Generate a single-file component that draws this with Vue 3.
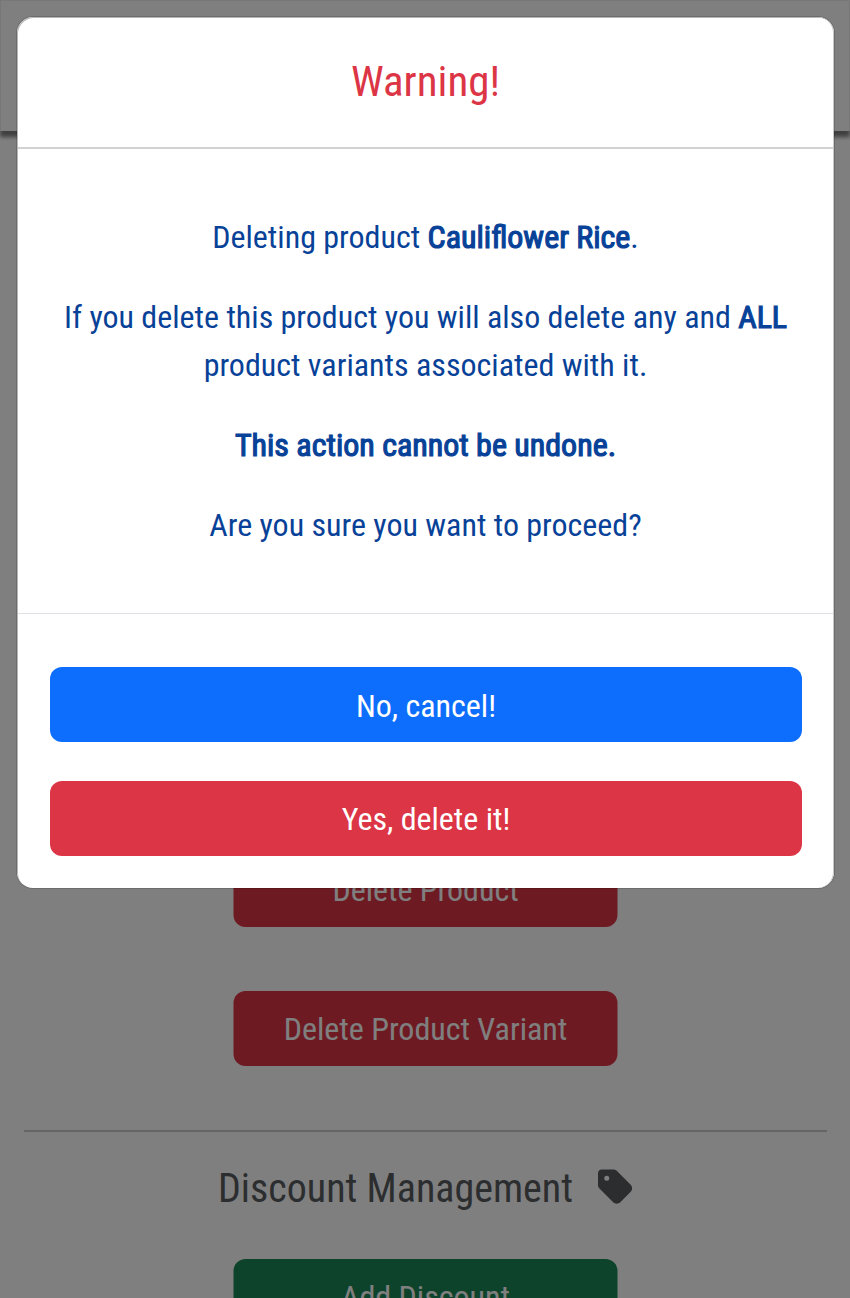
<script setup>
const actions = [
  { label: 'Delete Product', tone: 'danger' },
  { label: 'Delete Product Variant', tone: 'danger' }
]
</script>

<template>
  <div class="screen">
    <div class="page">
      <div class="navbar"></div>
      <div class="management">
        <div v-for="a in actions" :key="a.label" class="btn page-btn" :class="a.tone">
          <span class="label">{{ a.label }}</span>
        </div>
      </div>
      <hr class="rule" />
      <div class="heading">
        <span>Discount Management</span>
        <svg class="tag" viewBox="0 0 448 512" fill="currentColor">
          <path d="M0 80V229.5c0 17 6.7 33.3 18.7 45.3l176 176c25 25 65.5 25 90.5 0L418.7 317.3c25-25 25-65.5 0-90.5l-176-176c-12-12-28.3-18.7-45.3-18.7H48C21.5 32 0 53.5 0 80zm112 32a32 32 0 1 1 0 64 32 32 0 1 1 0-64z" />
        </svg>
      </div>
      <div class="btn page-btn success"><span class="label">Add Discount</span></div>
    </div>
    <div class="backdrop">
      <div class="modal">
        <div class="modal-header"><h1>Warning!</h1></div>
        <div class="modal-body">
          <p>Deleting product <b>Cauliflower Rice</b>.</p>
          <p>If you delete this product you will also delete any and <b>ALL</b><br />product variants associated with it.</p>
          <p><b>This action cannot be undone.</b></p>
          <p>Are you sure you want to proceed?</p>
        </div>
        <div class="modal-footer">
          <div class="btn primary"><span class="label">No, cancel!</span></div>
          <div class="btn danger"><span class="label">Yes, delete it!</span></div>
        </div>
      </div>
    </div>
  </div>
</template>

<style>
body { margin: 0; overflow: hidden; }
</style>

<style scoped>
* { box-sizing: border-box; }
.screen {
  position: relative;
  width: 850px;
  height: 1298px;
  overflow: hidden;
  background: #fff;
  font-family: "Roboto Condensed", Roboto, "Liberation Sans", sans-serif;
  font-stretch: 75%;
  font-size: 32px;
  line-height: 48px;
}
.navbar {
  height: 131px;
  border: 1px solid #eee;
  border-bottom: 0;
  box-shadow: 0 6px 4px #808080;
}
.management {
  display: flex;
  flex-direction: column;
  align-items: center;
  gap: 64px;
  padding-top: 721px;
}
.btn {
  height: 75px;
  border-radius: 12px;
  color: #fff;
  text-align: center;
  line-height: 77px;
}
.page-btn { width: 384px; margin: 0 auto; line-height: 76px; transform: translateX(0.5px); }
.danger { background: #dc3545; }
.success { background: #198754; }
.primary { background: #0d6efd; line-height: 78px; }
.rule {
  margin: 64px 23px 0 24px;
  border: 0;
  height: 2px;
  background: #c9cacb;
}
.heading {
  height: 127px;
  padding: 28px 0 0 1px;
  display: flex;
  justify-content: center;
  gap: 25px;
  font-size: 40px;
  line-height: 58px;
  color: #585b5f;
}
.tag { width: 35px; height: 40px; margin-top: 7px; }
.backdrop {
  position: absolute;
  inset: 0;
  padding: 17px 16px 0 17px;
  background: rgba(0, 0, 0, 0.5);
}
.modal {
  height: 871px;
  padding: 0 1px;
  border-radius: 16px;
  background: #fff;
  box-shadow: 0 0 0 1px rgba(0, 0, 0, 0.15), inset 1px 1px #b8b8b8, inset -1px 0 #c8c8c8;
}
.modal-header {
  height: 132px;
  border-bottom: 2px solid #d2d2d2;
  text-align: center;
}
h1 {
  margin: 0;
  padding-top: 32px;
  font-size: 43px;
  line-height: 64px;
  font-weight: 400;
  color: #dc3545;
}
.modal-body {
  height: 465px;
  padding-top: 64px;
  border-bottom: 1px solid #dee2e6;
  text-align: center;
  color: #084298;
}
p { margin: 0 0 32px; white-space: nowrap; }
b { font-weight: 400; -webkit-text-stroke: 1.2px currentColor; }
.modal-footer {
  display: flex;
  flex-direction: column;
  gap: 39px;
  padding: 53px 31px 0 32px;
}
</style>
